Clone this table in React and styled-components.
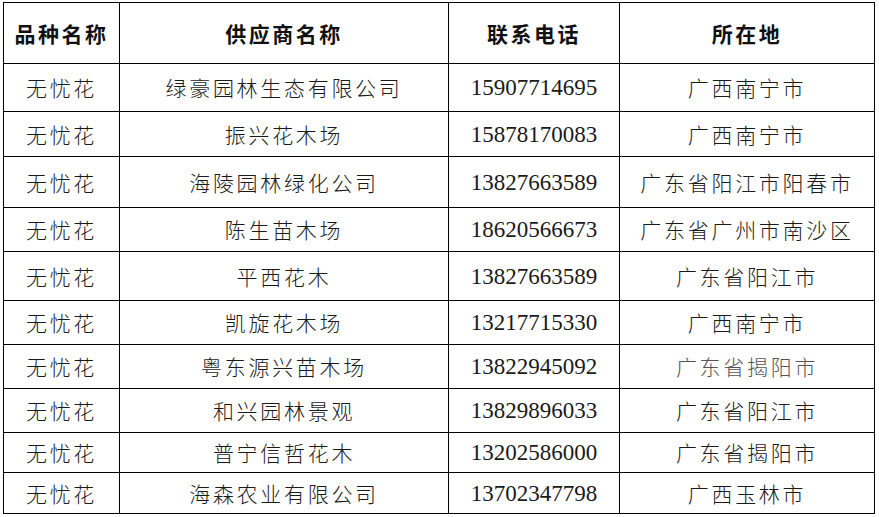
import React from "react";
import styled, { createGlobalStyle } from "styled-components";

const Global = createGlobalStyle`
  html, body { margin: 0; padding: 0; background: #fff; }
  body { width: 879px; height: 517px; overflow: hidden; }
`;

const Page = styled.div`
  padding: 2px 0 0 3px;
`;

const Table = styled.table`
  border-collapse: collapse;
  table-layout: fixed;
  width: 871px;
`;

const HeadCell = styled.th`
  border: 1px solid #000;
  font-family: "Noto Sans CJK SC", sans-serif;
  font-weight: 700;
  font-size: 21px;
  letter-spacing: 2.5px;
  color: #111;
  text-align: center;
  vertical-align: middle;
  padding: 0;
`;

const Cell = styled.td`
  border: 1px solid #000;
  font-family: ${(p) =>
    p.$num ? '"Liberation Serif", serif' : '"Noto Sans CJK SC", sans-serif'};
  font-weight: ${(p) => (p.$num ? 400 : 300)};
  font-size: ${(p) => (p.$num ? "23px" : "21px")};
  letter-spacing: ${(p) => (p.$num ? "0" : "2.7px")};
  color: ${(p) => (p.$muted ? "#555" : "#1a1a1a")};
  text-align: center;
  vertical-align: middle;
  padding: 0;
  white-space: nowrap;
  line-height: 1;
`;

const Row = styled.tr`
  height: ${(p) => p.$h}px;
`;

const cols = [116, 329, 171, 255];

const rows = [
  ["无忧花", "绿豪园林生态有限公司", "15907714695", "广西南宁市", 48],
  ["无忧花", "振兴花木场", "15878170083", "广西南宁市", 45],
  ["无忧花", "海陵园林绿化公司", "13827663589", "广东省阳江市阳春市", 51],
  ["无忧花", "陈生苗木场", "18620566673", "广东省广州市南沙区", 44],
  ["无忧花", "平西花木", "13827663589", "广东省阳江市", 49],
  ["无忧花", "凯旋花木场", "13217715330", "广西南宁市", 44],
  ["无忧花", "粤东源兴苗木场", "13822945092", "广东省揭阳市", 44, true],
  ["无忧花", "和兴园林景观", "13829896033", "广东省阳江市", 44],
  ["无忧花", "普宁信哲花木", "13202586000", "广东省揭阳市", 40],
  ["无忧花", "海森农业有限公司", "13702347798", "广西玉林市", 41],
];

export default function App() {
  return (
    <>
      <Global />
      <Page>
        <Table>
          <colgroup>
            {cols.map((w, i) => (
              <col key={i} style={{ width: w }} />
            ))}
          </colgroup>
          <thead>
            <Row $h={61}>
              <HeadCell>品种名称</HeadCell>
              <HeadCell>供应商名称</HeadCell>
              <HeadCell>联系电话</HeadCell>
              <HeadCell>所在地</HeadCell>
            </Row>
          </thead>
          <tbody>
            {rows.map((r, i) => (
              <Row key={i} $h={r[4]}>
                <Cell>{r[0]}</Cell>
                <Cell>{r[1]}</Cell>
                <Cell $num>{r[2]}</Cell>
                <Cell $muted={r[5]}>{r[3]}</Cell>
              </Row>
            ))}
          </tbody>
        </Table>
      </Page>
    </>
  );
}
